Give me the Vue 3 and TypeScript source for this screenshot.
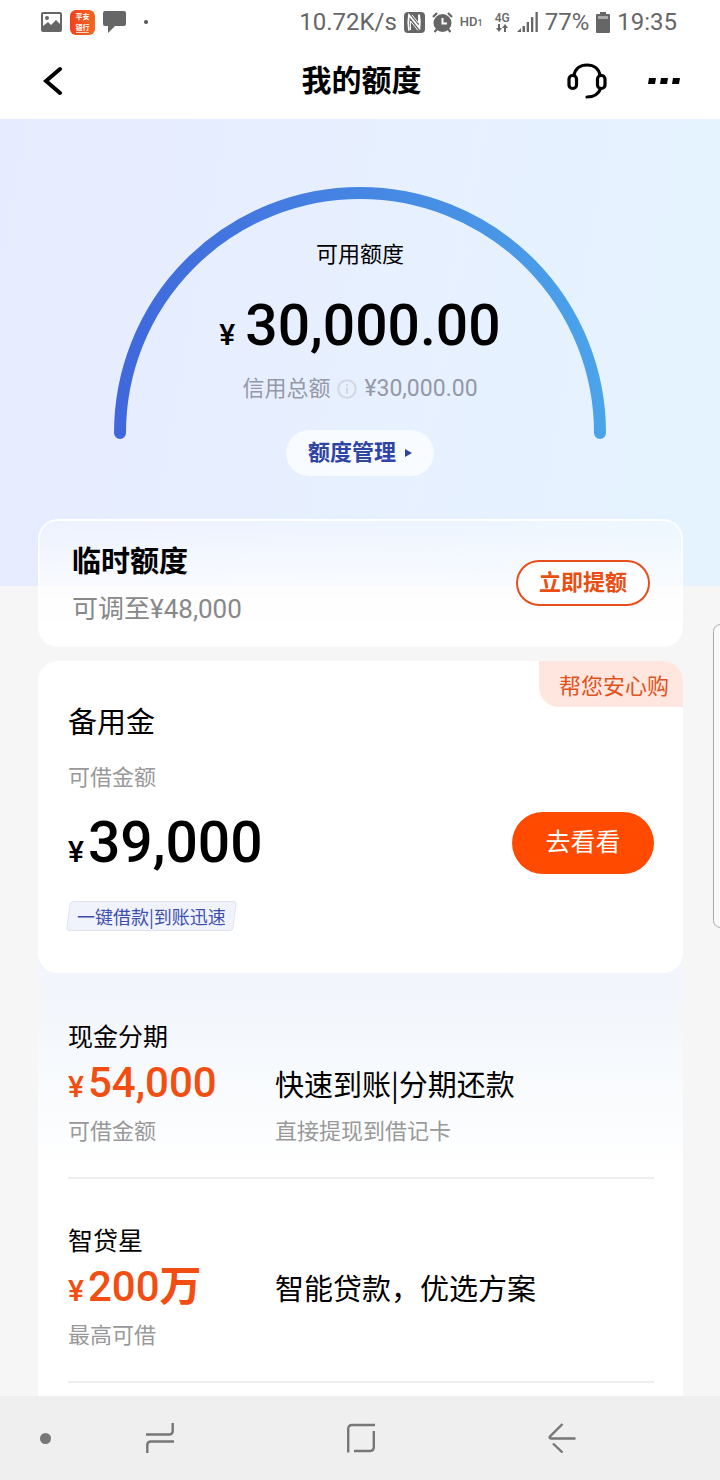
<script setup lang="ts">
interface Offer {
  title: string
  amount: string
  unit: string
  caption: string
  headline: string
  detail: string
}

const offers: Offer[] = [
  { title: '现金分期', amount: '54,000', unit: '', caption: '可借金额', headline: '快速到账|分期还款', detail: '直接提现到借记卡' },
  { title: '智贷星', amount: '200', unit: '万', caption: '最高可借', headline: '智能贷款，优选方案', detail: '' },
]
</script>

<template>
  <div class="screen">
    <div class="status">
      <div class="status-left">
        <svg width="21" height="20" viewBox="0 0 21 20">
          <rect x="1" y="1" width="19" height="18" rx="1" fill="none" stroke="#666" stroke-width="2" />
          <circle cx="6" cy="6" r="2" fill="#666" />
          <path d="M2 14 L7 10 L10 13 L15 8 L19 12 V18 H2 Z" fill="#666" />
        </svg>
        <svg class="bank" width="25" height="25" viewBox="0 0 25 25">
          <defs>
            <linearGradient id="bank-fill" x1="0" y1="0" x2="1" y2="0">
              <stop offset="0" stop-color="#f1421f" />
              <stop offset="1" stop-color="#f4671f" />
            </linearGradient>
          </defs>
          <rect width="25" height="25" rx="6" fill="url(#bank-fill)" />
          <text x="12.5" y="9" text-anchor="middle">平安</text>
          <text x="12.5" y="20" text-anchor="middle">银行</text>
          <rect x="6" y="22" width="13" height="1" fill="#ffd9c4" />
        </svg>
        <svg width="23" height="22" viewBox="0 0 23 22">
          <path d="M2 0 H21 Q23 0 23 2 V13 Q23 15 21 15 H12 L5 22 V15 H2 Q0 15 0 13 V2 Q0 0 2 0 Z" fill="#666" />
        </svg>
        <i class="more-dot"></i>
      </div>
      <div class="status-right">
        <span>10.72K/s</span>
        <svg width="21" height="21" viewBox="0 0 21 21">
          <rect width="21" height="21" rx="4" fill="#666" />
          <path d="M5 18.500 C4 13 4 8 5 3 L15.500 16 C16.300 11 16 7 15 2.500" fill="none" stroke="#fff" stroke-width="1.800" />
          <path d="M6.500 18 V9 L14 18.500 M8 3 L14.500 11 V3" fill="none" stroke="#fff" stroke-width="1" />
        </svg>
        <svg width="21" height="21" viewBox="0 0 21 21">
          <circle cx="10.500" cy="11" r="9" fill="#666" />
          <path d="M1 5 L5 1 M16 1 L20 5 M5 17 L2.500 20 M16 17 L18.500 20" stroke="#666" stroke-width="2.200" />
          <path d="M10.500 6 V11.500 H15" fill="none" stroke="#fff" stroke-width="2" />
        </svg>
        <span class="hd">HD<small>1</small></span>
        <span class="net">
          <b>4G</b>
          <svg width="12" height="8" viewBox="0 0 12 8">
            <path d="M3 0 V5 M9 8 V3" stroke="#666" stroke-width="2" />
            <path d="M0 4 H6 L3 8 Z M6 4 H12 L9 0 Z" fill="#666" />
          </svg>
        </span>
        <svg width="21" height="20" viewBox="0 0 21 20">
          <path d="M0 20 L4 16 V20 Z M5.500 14 H8 V20 H5.500 Z M9.700 10 H12 V20 H9.700 Z M14 5 H16.300 V20 H14 Z M18.500 0 H20.800 V20 H18.500 Z" fill="#666" />
        </svg>
        <span>77%</span>
        <svg width="14" height="21" viewBox="0 0 14 21">
          <path d="M4 0 H10 V2 H13 Q14 2 14 3 V20 Q14 21 13 21 H1 Q0 21 0 20 V3 Q0 2 1 2 H4 Z" fill="#666" />
          <rect x="2" y="4" width="10" height="3" fill="#aaa" />
        </svg>
        <span>19:35</span>
      </div>
    </div>

    <header class="bar">
      <button class="icon-btn" type="button" aria-label="返回">
        <svg width="20" height="30" viewBox="0 0 20 30">
          <path d="M17 3 L3 15 L17 27" fill="none" stroke="#000" stroke-width="4" stroke-linecap="round" />
        </svg>
      </button>
      <h1>我的额度</h1>
      <div class="actions">
        <button class="icon-btn" type="button" aria-label="客服">
          <svg width="40" height="36" viewBox="0 0 40 36">
            <g fill="none" stroke="#000" stroke-width="3.200">
              <rect x="2" y="12.500" width="7.500" height="13" rx="3.500" />
              <rect x="30.500" y="12.500" width="7.500" height="13" rx="3.500" />
              <path d="M7 12.500 C8 6 13 2 20 2 S32 6 33 12.500" />
              <path d="M33.500 25.500 C32 30.500 27 34 20 34" stroke-linecap="round" />
            </g>
          </svg>
        </button>
        <button class="icon-btn" type="button" aria-label="更多">
          <svg width="32" height="8" viewBox="0 0 32 8">
            <path d="M1 1 H8 L7 7 H0 Z M13 1 H20 L19 7 H12 Z M25 1 H32 L31 7 H24 Z" fill="#000" />
          </svg>
        </button>
      </div>
    </header>

    <main>
      <section class="hero">
        <div class="gauge">
          <svg class="arc" width="492" height="252" viewBox="0 0 492 252">
            <defs>
              <linearGradient id="arc-stroke" x1="0" y1="0" x2="1" y2="0">
                <stop offset="0" stop-color="#4068dc" />
                <stop offset="1" stop-color="#4ba3ea" />
              </linearGradient>
            </defs>
            <path d="M6 246 A240 240 0 0 1 486 246" fill="none" stroke="url(#arc-stroke)" stroke-width="12" stroke-linecap="round" />
          </svg>
          <div class="reading">
            <p>可用额度</p>
            <p class="total"><span>¥</span>30,000.00</p>
            <p class="credit">
              信用总额
              <svg width="20" height="20" viewBox="0 0 20 20">
                <circle cx="10" cy="10" r="8.800" fill="none" stroke="#d3d6e0" stroke-width="2" />
                <path d="M10 8.500 V15 M10 5 V7" stroke="#ccd0da" stroke-width="1.600" />
              </svg>
              <span>¥30,000.00</span>
            </p>
          </div>
        </div>
        <button class="manage" type="button">
          额度管理
          <svg width="7" height="8" viewBox="0 0 7 8"><path d="M0 0 L7 4 L0 8 Z" fill="#2f45a5" /></svg>
        </button>
      </section>

      <div class="cards">
        <section class="temp">
          <div>
            <h2>临时额度</h2>
            <p>可调至¥48,000</p>
          </div>
          <button type="button">立即提额</button>
        </section>

        <section class="reserve">
          <span class="badge">帮您安心购</span>
          <h2>备用金</h2>
          <p class="muted">可借金额</p>
          <div class="reserve-row">
            <p class="sum"><span>¥</span>39,000</p>
            <button type="button">去看看</button>
          </div>
          <span class="tag">一键借款|到账迅速</span>
        </section>

        <section class="offers">
          <article v-for="offer in offers" :key="offer.title" class="offer">
            <h3>{{ offer.title }}</h3>
            <div class="offer-grid">
              <p class="price"><span>¥</span>{{ offer.amount }}<b>{{ offer.unit }}</b></p>
              <p class="headline">{{ offer.headline }}</p>
              <p class="muted">{{ offer.caption }}</p>
              <p class="muted">{{ offer.detail }}</p>
            </div>
          </article>
        </section>
      </div>
    </main>

    <nav class="keys">
      <i class="pin"></i>
      <button class="icon-btn" type="button" aria-label="最近任务">
        <svg width="28" height="32" viewBox="0 0 28 32">
          <path d="M0 12.500 H23 Q26.700 12.500 26.700 9 V1 M28 19.500 H5 Q1.300 19.500 1.300 23 V31" fill="none" stroke="#777" stroke-width="2.400" />
        </svg>
      </button>
      <button class="icon-btn" type="button" aria-label="主屏幕">
        <svg width="28" height="30" viewBox="0 0 28 30">
          <path d="M1.200 29.500 V6 Q1.200 2 5 2 H28 M26.800 8 V24 Q26.800 28 23 28 H7" fill="none" stroke="#777" stroke-width="2.400" />
        </svg>
      </button>
      <button class="icon-btn" type="button" aria-label="后退">
        <svg width="28" height="30" viewBox="0 0 28 30">
          <path d="M14.500 1 L2 13.500 Q1 15.500 3 15.500 H27.500 M5 20.500 L14.500 29.500" fill="none" stroke="#777" stroke-width="2.400" />
        </svg>
      </button>
    </nav>

    <div class="edge-handle"></div>
  </div>
</template>

<style>
body {
  margin: 0;
  background: #f6f6f6;
}
</style>

<style scoped>
.screen {
  position: relative;
  display: flex;
  flex-direction: column;
  min-height: 100vh;
  overflow: hidden;
  background: #f6f6f6;
  color: #000;
  font-family: Roboto, "Noto Sans CJK SC", sans-serif;
  font-size: 22px;
  line-height: 30px;
}

h1,
h2,
h3,
p {
  margin: 0;
  font-weight: 400;
}

svg {
  display: block;
  flex: none;
}

button {
  font-family: inherit;
  line-height: 30px;
  cursor: pointer;
}

.icon-btn {
  display: flex;
  align-items: center;
  justify-content: center;
  padding: 0;
  border: 0;
  background: none;
}

.status {
  display: flex;
  justify-content: space-between;
  align-items: center;
  height: 44px;
  padding: 0 43px 0 41px;
  background: #fff;
  color: #666;
  font-size: 24px;
}

.status-left {
  display: flex;
  align-items: center;
  gap: 8px;
}

.bank text {
  fill: #fff;
  font-family: "Noto Sans CJK SC", sans-serif;
  font-size: 7px;
  font-weight: 700;
}

.more-dot {
  width: 4px;
  height: 4px;
  margin-left: 10px;
  border-radius: 50%;
  background: #555;
}

.status-right {
  display: flex;
  align-items: center;
  gap: 7px;
}

.hd {
  font-size: 13px;
  font-weight: 500;
}

.hd small {
  font-size: 9px;
}

.net {
  display: flex;
  flex-direction: column;
  align-items: center;
  margin-left: 5px;
  font-size: 12px;
  line-height: 12px;
}

.net b {
  font-weight: 500;
}

.bar {
  box-sizing: border-box;
  display: grid;
  grid-template-columns: 1fr auto 1fr;
  align-items: center;
  height: 75px;
  padding: 0 40px 2px 43px;
  background: #fff;
}

.bar > .icon-btn {
  justify-self: start;
}

.bar h1 {
  font-size: 30px;
  line-height: 40px;
  font-weight: 700;
}

.actions {
  display: flex;
  justify-content: flex-end;
  gap: 41px;
}

.hero {
  box-sizing: border-box;
  display: flex;
  flex-direction: column;
  align-items: center;
  height: 467px;
  padding-top: 68px;
  background: linear-gradient(100deg, #e6ebff 0%, #e7f0ff 50%, #e5f3ff 100%);
}

.gauge {
  display: grid;
  justify-items: center;
}

.arc,
.reading {
  grid-area: 1 / 1;
}

.reading {
  display: flex;
  flex-direction: column;
  align-items: center;
  padding-top: 53px;
}

.total {
  margin-top: 22px;
  font-size: 57px;
  line-height: 68px;
  font-weight: 500;
}

.total span {
  margin-right: 10px;
  font-size: 30px;
  line-height: 30px;
}

.credit {
  display: flex;
  align-items: center;
  gap: 7px;
  margin-top: 14px;
  color: #9598a8;
}

.credit span {
  font-size: 23px;
}

.manage {
  display: flex;
  align-items: center;
  gap: 9px;
  height: 46px;
  margin-top: -9px;
  padding: 0 22px;
  border: 0;
  border-radius: 23px;
  background: rgba(255, 255, 255, 0.7);
  color: #2f45a5;
  font-size: 22px;
  font-weight: 700;
}

.cards {
  display: flex;
  flex-direction: column;
  margin: -67px 37px 0 38px;
}

.temp {
  display: flex;
  align-items: center;
  justify-content: space-between;
  box-sizing: border-box;
  height: 128px;
  padding: 0 31px 0 32px;
  border: 2px solid rgba(255, 255, 255, 0.7);
  border-radius: 20px;
  background: linear-gradient(rgba(255, 255, 255, 0.3), rgba(255, 255, 255, 0.8) 60%, #fff);
}

.temp h2 {
  font-size: 29px;
  line-height: 40px;
  font-weight: 700;
}

.temp p {
  margin-top: 12px;
  color: #888;
  font-size: 26px;
}

.temp button {
  width: 134px;
  height: 46px;
  padding: 0;
  border: 2px solid #e84e1c;
  border-radius: 23px;
  background: #fff;
  color: #ea4e12;
  font-size: 22px;
  font-weight: 700;
}

.reserve {
  position: relative;
  z-index: 1;
  box-sizing: border-box;
  height: 312px;
  margin-top: 14px;
  padding: 42px 29px 0 30px;
  border-radius: 20px;
  background: #fff;
}

.badge,
.tag,
.headline,
.offer h3 {
  font-family: "Noto Sans CJK SC", sans-serif;
}

.badge {
  position: absolute;
  top: 0;
  right: 0;
  padding: 8px 14px 8px 20px;
  border-radius: 0 20px 0 20px;
  background: #ffe7e0;
  color: #e2521c;
}

.reserve h2 {
  font-size: 29px;
  line-height: 40px;
}

.muted {
  color: #999;
}

.reserve .muted {
  margin-top: 20px;
}

.reserve-row {
  display: flex;
  align-items: center;
  justify-content: space-between;
  margin-top: 16px;
}

.sum {
  font-size: 57px;
  line-height: 68px;
  font-weight: 500;
}

.sum span {
  margin-right: 4px;
  font-size: 30px;
  line-height: 30px;
}

.reserve-row button {
  width: 142px;
  height: 62px;
  padding: 0;
  border: 0;
  border-radius: 31px;
  background: #ff4a00;
  color: #fff;
  font-size: 25px;
}

.tag {
  position: relative;
  z-index: 0;
  display: inline-block;
  margin-top: 24px;
  padding: 0 9px;
  color: #3d4fae;
  font-size: 18px;
}

.tag::before {
  content: "";
  position: absolute;
  inset: 0;
  z-index: -1;
  border: 1px solid #dfe2f4;
  border-radius: 4px;
  background: #f1f3fc;
  transform: skewX(-8deg);
}

.offers {
  margin-top: -24px;
  padding: 64px 29px 13px 30px;
  background: linear-gradient(#f2f6fc 0, #f3f7fc 70px, #fff 220px);
}

.offer {
  box-sizing: border-box;
  height: 204px;
  border-bottom: 2px solid #ededed;
}

.offer:first-child {
  height: 166px;
}

.offer + .offer {
  padding-top: 38px;
}

.offer h3 {
  padding-top: 6px;
  font-size: 25px;
  line-height: 32px;
}

.offer-grid {
  display: grid;
  grid-template-columns: 207px 1fr;
  align-items: center;
  row-gap: 8px;
  padding-top: 6px;
}

.price {
  color: #f24e12;
  font-size: 42px;
  line-height: 52px;
  font-weight: 500;
}

.price span {
  margin-right: 4px;
  font-size: 30px;
  line-height: 30px;
}

.price b {
  font-weight: 700;
}

.headline {
  font-size: 29px;
  line-height: 52px;
}

.keys {
  display: grid;
  grid-template-columns: 59px repeat(3, 1fr) 58px;
  align-items: center;
  height: 84px;
  margin-top: auto;
  background: #efefef;
}

.pin {
  justify-self: end;
  width: 11px;
  height: 11px;
  margin-right: 8px;
  border-radius: 50%;
  background: #777;
}

.edge-handle {
  position: absolute;
  top: 624px;
  right: -8px;
  box-sizing: border-box;
  width: 15px;
  height: 304px;
  border: 1px solid #aaa;
  border-radius: 8px;
  background: #fafafa;
}
</style>
